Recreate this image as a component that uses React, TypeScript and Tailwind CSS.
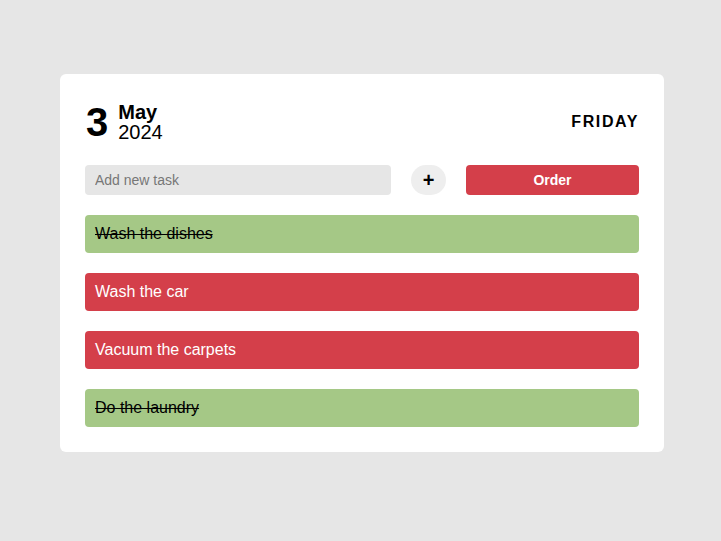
const tasks = [
  { title: "Wash the dishes", done: true },
  { title: "Wash the car", done: false },
  { title: "Vacuum the carpets", done: false },
  { title: "Do the laundry", done: true },
];

export default function App() {
  return (
    <main
      className="bg-[#e6e6e6] min-h-[541px] flex pl-[60px] pt-[74px]"
      style={{ fontFamily: '"Liberation Sans", Arial, sans-serif' }}
    >
      <div className="bg-white w-[604px] h-[378px] rounded-md px-[25px] pt-[25px]">
        {/* header */}
        <div className="flex items-center justify-between h-[45px]">
          <div className="flex items-center gap-[10px] pl-[1px]">
            <span className="text-[40px] font-bold leading-none text-black">3</span>
            <div className="flex flex-col leading-[20px] text-black">
              <span className="text-[20px] font-bold">May</span>
              <span className="text-[20px]">2024</span>
            </div>
          </div>
          <span className="text-[16px] font-bold tracking-[0.1em] text-black">FRIDAY</span>
        </div>

        {/* input row */}
        <div className="flex items-center mt-[21px] h-[30px]">
          <input
            className="w-[306px] h-[30px] bg-[#e6e6e6] rounded px-[10px] text-[14px] text-[#555] placeholder:text-[#777] outline-none"
            placeholder="Add new task"
          />
          <button className="ml-[20px] w-[35px] h-[30px] rounded-full bg-[#eeeeee] text-black text-[20px] font-bold leading-none flex items-center justify-center">
            +
          </button>
          <button className="ml-[20px] w-[173px] h-[30px] rounded bg-[#d43f4a] text-white text-[14px] font-bold">
            Order
          </button>
        </div>

        {/* tasks */}
        <div className="flex flex-col gap-[20px] mt-[20px]">
          {tasks.map((t) => (
            <div
              key={t.title}
              className={
                t.done
                  ? "h-[38px] rounded flex items-center px-[10px] bg-[#a5c886] text-black line-through text-[16px]"
                  : "h-[38px] rounded flex items-center px-[10px] bg-[#d43f4a] text-white text-[16px]"
              }
            >
              {t.title}
            </div>
          ))}
        </div>
      </div>
    </main>
  );
}
